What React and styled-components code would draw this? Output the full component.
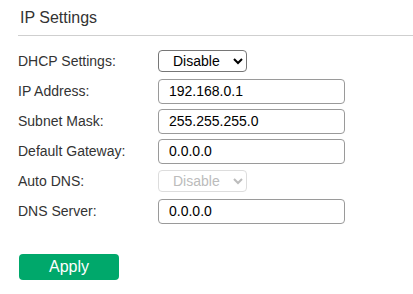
import React from 'react';
import styled, { createGlobalStyle } from 'styled-components';

const GlobalStyle = createGlobalStyle`
  body {
    margin: 0;
    background: #fff;
    font-family: Arial, "Liberation Sans", sans-serif;
  }
`;

const Page = styled.div`
  padding: 0 0 0 18px;
`;

const Header = styled.div`
  height: 35px;
  border-bottom: 1px solid #cfcfcf;
  display: flex;
  align-items: flex-end;
`;

const Title = styled.h2`
  margin: 0 0 8px 2px;
  font-size: 16px;
  font-weight: normal;
  color: #333;
`;

const Form = styled.form`
  display: flex;
  flex-direction: column;
  padding-top: 10px;
`;

const Row = styled.div`
  display: flex;
  align-items: center;
  height: 30px;
`;

const Label = styled.label`
  width: 140px;
  font-size: 14px;
  color: #333;
`;

const Select = styled.select`
  width: 89px;
  height: 22px;
  font-family: Arial, "Liberation Sans", sans-serif;
  font-size: 14px;
  padding: 0 4px 0 10px;
  color: #000;
  border: 1px solid #767676;
  border-radius: 4px;
  background: #fff;

  &:disabled {
    color: #a0a0a0;
    border-color: #cfcfcf;
  }
`;

const Input = styled.input`
  width: 187px;
  height: 25px;
  box-sizing: border-box;
  padding: 0 10px;
  font-family: Arial, "Liberation Sans", sans-serif;
  font-size: 14px;
  color: #000;
  border: 1px solid #9a9a9a;
  border-radius: 4px;
  outline: none;
`;

const Button = styled.button`
  margin-top: 28px;
  width: 100px;
  height: 26px;
  margin-left: 1px;
  background: #00a86b;
  color: #fff;
  border: none;
  border-radius: 4px;
  font-family: Arial, "Liberation Sans", sans-serif;
  font-size: 16px;
  cursor: pointer;
`;

export default function App() {
  return (
    <>
      <GlobalStyle />
      <Page>
        <Header>
          <Title>IP Settings</Title>
        </Header>
        <Form onSubmit={(e) => e.preventDefault()}>
          <Row>
            <Label>DHCP Settings:</Label>
            <Select defaultValue="disable">
              <option value="enable">Enable</option>
              <option value="disable">Disable</option>
            </Select>
          </Row>
          <Row>
            <Label>IP Address:</Label>
            <Input defaultValue="192.168.0.1" />
          </Row>
          <Row>
            <Label>Subnet Mask:</Label>
            <Input defaultValue="255.255.255.0" />
          </Row>
          <Row>
            <Label>Default Gateway:</Label>
            <Input defaultValue="0.0.0.0" />
          </Row>
          <Row>
            <Label>Auto DNS:</Label>
            <Select defaultValue="disable" disabled>
              <option value="enable">Enable</option>
              <option value="disable">Disable</option>
            </Select>
          </Row>
          <Row>
            <Label>DNS Server:</Label>
            <Input defaultValue="0.0.0.0" />
          </Row>
          <div>
            <Button type="submit">Apply</Button>
          </div>
        </Form>
      </Page>
    </>
  );
}
